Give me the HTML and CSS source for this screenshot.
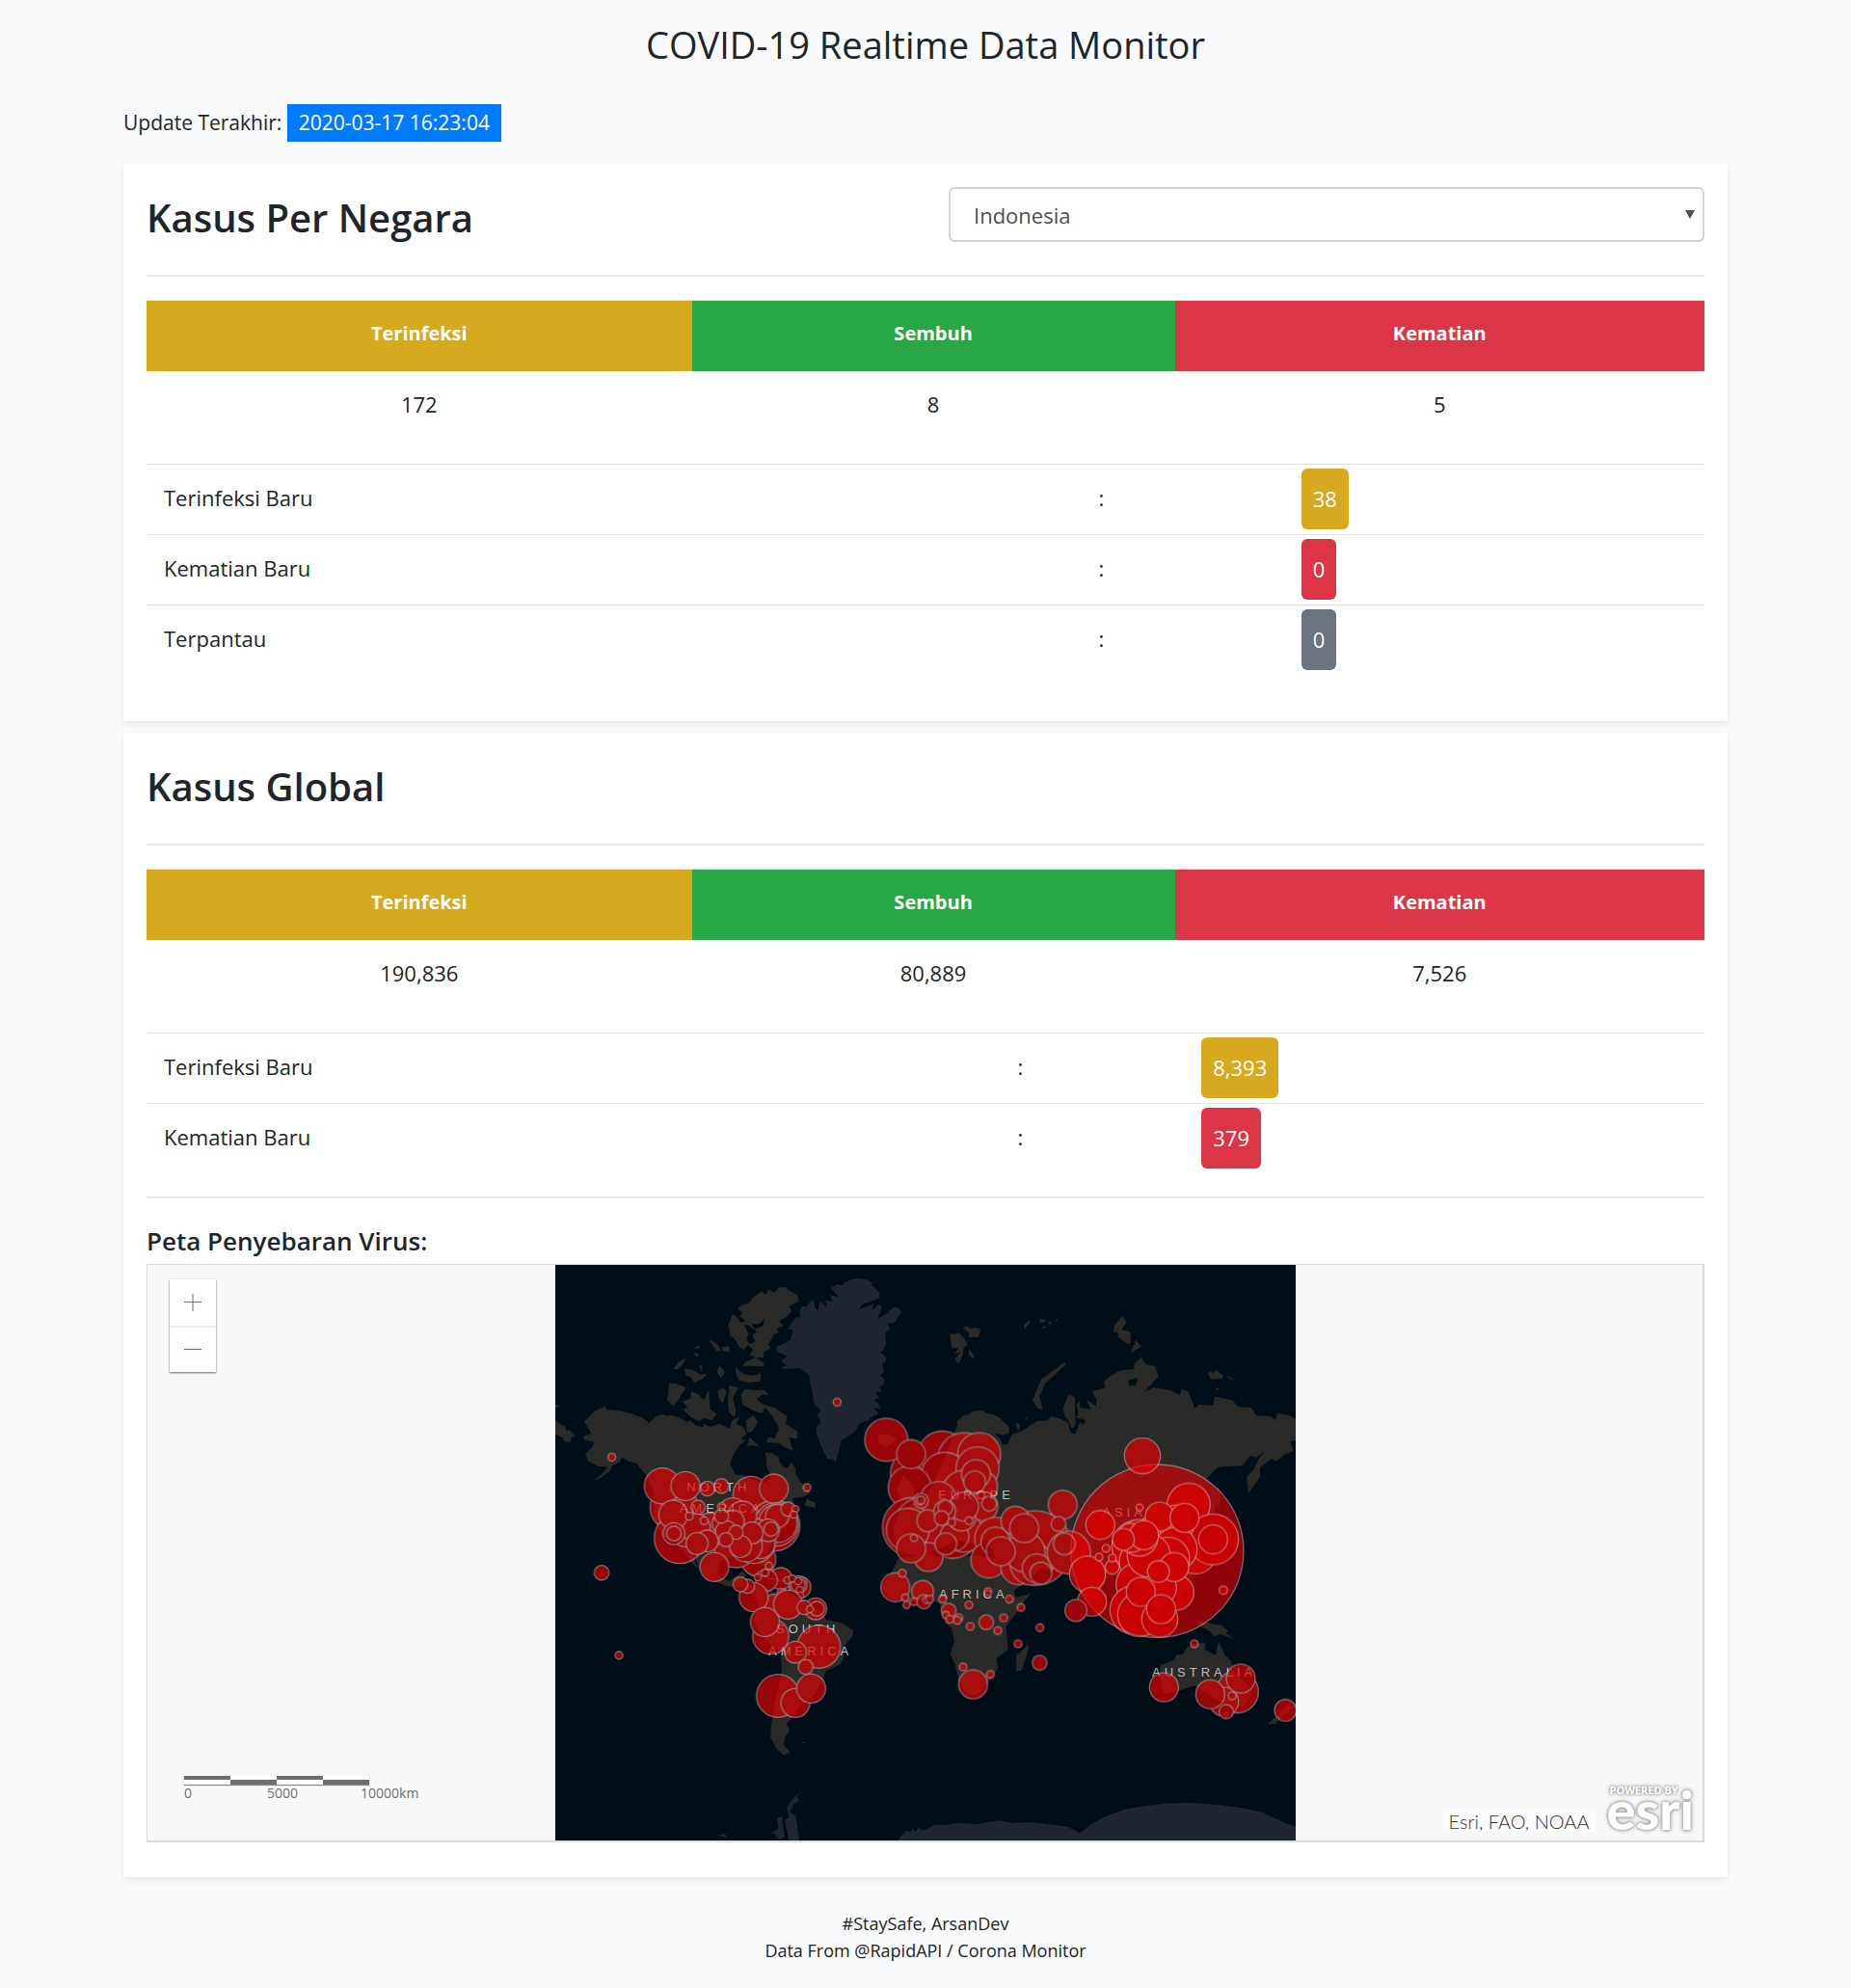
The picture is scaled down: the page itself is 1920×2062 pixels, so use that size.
FILE: index.html
```html
<!DOCTYPE html>
<html lang="id">
<head>
<meta charset="utf-8">
<meta name="viewport" content="width=device-width, initial-scale=1">
<title>COVID-19 Realtime Data Monitor</title>
<link rel="stylesheet" href="styles.css">
</head>
<body>
<div class="container">
  <header>
    <h1 class="page-title">COVID-19 Realtime Data Monitor</h1>
    <p class="updated">Update Terakhir: <span class="stamp">2020-03-17 16:23:04</span></p>
  </header>

  <main>
    <section class="card">
      <div class="card-head">
        <h2><label for="country">Kasus Per Negara</label></h2>
        <div class="select-wrap">
          <select id="country"><option>Indonesia</option></select>
        </div>
      </div>
      <table class="totals">
        <thead>
          <tr><th class="infected" scope="col">Terinfeksi</th><th class="recovered" scope="col">Sembuh</th><th class="deaths" scope="col">Kematian</th></tr>
        </thead>
        <tbody><tr><td>172</td><td>8</td><td>5</td></tr></tbody>
      </table>
      <table class="details">
        <tbody>
          <tr><td>Terinfeksi Baru</td><td>:</td><td><span class="badge infected">38</span></td></tr>
          <tr><td>Kematian Baru</td><td>:</td><td><span class="badge deaths">0</span></td></tr>
          <tr><td>Terpantau</td><td>:</td><td><span class="badge watched">0</span></td></tr>
        </tbody>
      </table>
    </section>

    <section class="card">
      <div class="card-head"><h2>Kasus Global</h2></div>
      <table class="totals">
        <thead>
          <tr><th class="infected" scope="col">Terinfeksi</th><th class="recovered" scope="col">Sembuh</th><th class="deaths" scope="col">Kematian</th></tr>
        </thead>
        <tbody><tr><td>190,836</td><td>80,889</td><td>7,526</td></tr></tbody>
      </table>
      <table class="details details-global">
        <tbody>
          <tr><td>Terinfeksi Baru</td><td>:</td><td><span class="badge infected">8,393</span></td></tr>
          <tr><td>Kematian Baru</td><td>:</td><td><span class="badge deaths">379</span></td></tr>
        </tbody>
      </table>
      <hr>
      <h3>Peta Penyebaran Virus:</h3>
      <div class="map">
        <svg class="world" viewBox="18 36 2304 1791" role="img" aria-label="Peta dunia">
          <rect class="sea" x="18" y="36" width="2304" height="1791"/>
          <!-- ice sheets -->
          <g class="ice">
            <path d="M780,198 L779,180 786,165 800,166 808,152 822,144 826,168 834,178 842,150 852,158 864,168 858,146 880,150 872,130 900,135 880,115 878,105 895,96 912,100 915,92 940,82 955,77 985,82 1003,90 1002,100 1026,120 1026,140 1000,150 975,158 962,175 990,165 1010,156 1003,178 1025,160 1035,165 1022,205 1045,190 1070,168 1082,168 1096,183 1072,216 1050,218 1060,235 1045,245 1047,280 1040,300 1030,308 1046,322 1047,335 1035,345 1042,370 1030,380 1044,392 1038,410 1025,418 1035,430 1015,432 1025,450 1008,456 1025,468 1030,485 1010,480 1025,500 1010,505 990,520 965,530 950,555 908,582 898,625 889,651 880,640 865,640 845,600 832,565 830,540 845,525 832,500 845,490 822,465 818,430 810,400 808,380 795,368 777,358 732,360 722,352 740,350 720,335 740,320 708,305 706,292 750,270 758,240 741,235 765,200z"/>
            <g transform="translate(0 600)">
              <path d="M800,1063 770,1088 775,1104 760,1114 748,1140 765,1148 778,1227 745,1227 732,1165 745,1155 738,1122 765,1090zM688,1205 713,1188 708,1158 722,1152 732,1215 715,1224 700,1206zM522,1212 545,1206 555,1217z"/>
              <path d="M1085,1227 1108,1196 1125,1200 1130,1186 1136,1200 1152,1185 1158,1195 1175,1192 1200,1178 1230,1180 1270,1172 1330,1176 1400,1165 1440,1172 1500,1170 1570,1178 1612,1184 1650,1204 1680,1180 1734,1150 1800,1128 1850,1120 1920,1112 1990,1110 2077,1116 2150,1124 2220,1140 2270,1165 2322,1184 2322,1227z"/>
            </g>
          </g>
          <!-- continents -->
          <g class="land">
            <path d="M108,523 L120,512 140,490 172,476 180,486 215,490 250,497 290,512 303,522 310,528 330,508 352,500 362,505 380,504 400,509 430,525 437,520 455,535 478,542 480,530 500,540 530,530 560,545 568,520 590,510 582,530 602,540 614,560 596,580 612,578 590,600 570,630 562,655 578,688 600,690 612,695 660,712 672,712 690,700 674,660 676,640 670,620 690,620 712,632 716,650 728,665 740,668 752,650 765,668 766,685 780,710 800,725 812,745 790,758 755,762 770,800 740,850 700,880 680,930 700,990 680,995 650,950 580,940 530,960 520,1000 560,1020 600,990 612,1000 600,1020 640,1040 660,1060 650,1075 600,1040 550,1035 490,1010 465,985 452,930 440,925 462,980 440,960 400,900 350,880 325,820 325,740 300,690 272,655 240,644 226,634 218,650 195,660 185,680 160,698 132,708 160,690 180,665 150,662 118,645 112,622 132,605 140,588 108,580 106,570 130,560 118,540z"/>
            <path d="M18,518 35,532 50,540 52,552 62,550 80,567 66,574 66,588 45,585 42,575 18,562zM18,470 30,472 28,478 18,480zM793,785 802,760 810,770 828,775 827,792z"/>
            <path d="M586,172 L600,160 620,155 632,138 660,118 672,128 682,112 700,122 712,107 735,105 742,115 760,122 774,135 776,150 745,165 755,180 735,200 715,210 728,225 705,235 715,245 695,255 690,270 680,285 690,295 668,305 665,325 640,325 622,315 635,300 615,285 640,275 630,255 645,245 640,235 665,225 670,205 650,220 630,220 640,240 620,225 605,222 620,250 612,268 622,280 605,300 590,290 575,265 560,255 560,235 555,225 570,190 580,195 595,215 610,212 592,195 600,185z"/>
            <path d="M578,350 590,365 605,375 635,380 658,372 656,398 620,402 590,395 582,380zM600,350 610,338 638,325 668,340 666,352 635,350zM495,268 520,280 535,302 520,305zM535,290 560,290 560,306 540,305zM386,360 400,340 425,325 415,345 400,360zM420,358 445,362 470,378 490,375 478,390 450,402 440,385 425,380zM466,350 474,348 475,372zM448,310 465,312 458,324zM520,368 530,348 545,368 535,390zM448,295 465,286 466,297z"/>
            <path d="M372,405 392,404 425,418 410,440 400,460 384,474 366,458zM414,462 440,450 440,430 462,438 480,455 495,425 498,460 500,485 520,500 505,520 482,512 465,522 440,510 415,485 430,480zM522,430 540,418 552,430 540,465 530,460zM560,412 588,418 570,450 580,490 575,510 558,495 555,460zM596,440 608,422 640,425 670,425 682,440 660,440 645,455 665,470 700,480 740,508 735,530 772,555 770,578 745,572 758,615 735,605 712,590 675,588 680,572 700,575 715,545 690,500 670,480 662,498 635,490 600,470zM610,520 635,505 648,525 630,555 615,558zM615,600 622,572 655,602 635,598z"/>
            <g transform="translate(0 600)">
              <path d="M600,440 L650,430 700,455 730,445 790,480 850,520 860,540 915,552 944,572 944,590 918,620 915,660 905,678 858,702 850,730 825,770 810,790 790,800 770,822 752,848 737,862 747,885 732,905 729,930 748,952 730,962 712,948 702,935 698,925 688,908 690,870 693,850 700,800 715,740 722,700 720,650 690,620 655,580 635,540 650,500 640,470zM785,921 795,921 795,924 787,925zM610,395 660,400 700,410 740,415 740,425 680,415z"/>
            </g>
            <g transform="translate(930 420)">
              <path d="M155,530 L130,580 100,620 130,655 180,665 250,655 285,670 290,700 300,730 320,745 330,785 317,827 333,862 345,915 370,955 400,955 440,910 465,872 462,840 497,812 491,740 530,690 548,662 567,640 520,650 515,625 480,570 460,530 400,520 300,530 250,515zM558,797 560,812 540,878 523,880 523,830 545,812z"/>
              <path d="M92,148 118,142 152,155 140,170 122,182 95,172zM150,320 170,270 200,300 210,340 170,350z"/>
            </g>
            <g transform="translate(1140 15)">
              <path d="M118,545 L130,518 128,508 148,490 165,486 178,477 205,474 222,484 240,486 262,498 290,525 290,545 270,550 245,545 262,562 270,580 284,578 300,548 325,540 350,525 375,508 410,505 420,492 450,500 475,512 480,540 495,548 510,510 520,518 528,508 520,500 500,498 505,480 500,455 508,445 512,465 530,468 545,470 530,440 560,460 562,440 548,415 590,403 585,385 610,363 640,348 678,345 680,328 700,308 715,330 745,336 755,368 710,416 740,403 790,410 822,426 826,408 848,415 868,468 880,455 925,458 930,430 985,442 1002,463 1043,465 1060,490 1105,492 1118,505 1125,483 1160,488 1182,500 1182,568 1165,570 1175,600 1150,610 1120,633 1108,625 1065,655 1085,600 1060,620 1040,615 1018,645 940,650 905,685 940,725 930,790 900,810 870,780 850,820 880,880 890,930 870,990 830,1050 780,1060 750,1100 720,1060 690,1010 650,990 600,990 580,1030 550,1085 510,1040 480,985 390,965 340,1010 305,1035 260,960 220,875 190,890 130,880 80,900 10,930 -60,910 -70,840 -50,790 30,740 60,690 90,620z"/>
              <path d="M363,443 375,410 392,375 425,352 460,325 468,330 430,365 402,390 385,430 395,470 380,468zM459,465 475,425 495,432 495,480 497,520 485,530 475,505 462,490zM105,235 120,238 132,232 148,245 162,270 148,278 148,295 133,330 122,315 138,292 120,298 132,280 112,280zM147,218 158,210 172,220 185,215 201,223 195,246 165,246 165,232zM165,282 182,305 178,312 165,302zM335,210 350,195 357,198 340,220zM383,190 405,192 400,200 388,200zM390,218 402,210 405,215zM412,198 422,195 418,210zM432,198 445,183 440,195zM618,210 643,179 656,200 640,222 668,230 668,266 655,265 632,248 628,232 615,230zM669,293 685,256 703,275zM908,360 918,350 925,358 935,348 957,365 955,374 920,378zM965,365 992,378 975,375zM932,408 940,402 945,412zM310,512 325,518 320,540zM340,495 348,498 343,503z"/>
            </g>
            <g transform="translate(1470 420)">
              <path d="M740,255 742,275 705,327 699,275 720,255 735,222 755,195 750,225zM612,305 620,340 612,375 602,335zM540,720 570,728 622,738 642,755 634,762 660,779 618,765 595,772 585,755 562,745z"/>
              <path d="M430,862 L475,845 480,830 500,828 515,805 535,795 570,792 568,812 602,830 612,788 632,830 652,850 655,875 700,920 715,950 690,990 650,1000 600,965 540,925 490,940 440,950 430,900zM765,1045 790,1022 825,985 850,990 810,1020 790,1045zM622,1008 648,1005 635,1028z"/>
            </g>
          </g>
          <path class="sea" d="M1800,395 1830,388 1825,410 1805,412z"/>
          <!-- continent names -->
          <g class="names">
            <text x="427" y="741">NORTH</text><text x="404" y="808">AMERICA</text>
            <text x="705" y="1183">SOUTH</text><text x="681" y="1250">AMERICA</text>
            <text x="1209" y="766">EUROPE</text><text x="1212" y="1075">AFRICA</text>
            <text x="1720" y="819">ASIA</text><text x="1875" y="1316">AUSTRALIA</text>
          </g>
          <!-- outbreak epicentre -->
          <circle class="epicentre" cx="1891" cy="926" r="269"/>
          <!-- outbreak markers -->
          <g class="cases">
            <circle cx="895" cy="463" r="12"/><circle cx="194" cy="634" r="12"/>
            <g transform="translate(0 600)">
              <circle cx="387" cy="190" r="74"/><circle cx="351" cy="124" r="56"/><circle cx="405" cy="286" r="79"/><circle cx="627" cy="150" r="56"/>
              <circle cx="650" cy="352" r="54"/><circle cx="580" cy="310" r="68"/><circle cx="700" cy="247" r="79"/><circle cx="706" cy="243" r="68"/><circle cx="710" cy="240" r="60"/>
              <circle cx="635" cy="295" r="70"/><circle cx="655" cy="305" r="45"/><circle cx="612" cy="310" r="50"/><circle cx="500" cy="260" r="52"/>
              <circle cx="423" cy="268" r="45"/><circle cx="455" cy="255" r="45"/><circle cx="385" cy="213" r="45"/><circle cx="423" cy="124" r="45"/><circle cx="698" cy="132" r="45"/>
              <circle cx="570" cy="206" r="45"/><circle cx="600" cy="216" r="45"/><circle cx="560" cy="246" r="45"/><circle cx="708" cy="218" r="36"/><circle cx="680" cy="262" r="35"/>
              <circle cx="540" cy="240" r="34"/><circle cx="572" cy="234" r="34"/><circle cx="550" cy="266" r="34"/><circle cx="630" cy="270" r="34"/><circle cx="594" cy="312" r="34"/>
              <circle cx="491" cy="295" r="34"/><circle cx="459" cy="303" r="34"/><circle cx="387" cy="272" r="34"/><circle cx="387" cy="272" r="23"/>
              <circle cx="535" cy="218" r="22"/><circle cx="580" cy="268" r="22"/><circle cx="549" cy="291" r="22"/><circle cx="689" cy="258" r="22"/><circle cx="742" cy="196" r="22"/>
              <circle cx="462" cy="190" r="22"/><circle cx="491" cy="132" r="23"/><circle cx="535" cy="124" r="23"/><circle cx="535" cy="188" r="12"/>
              <circle cx="435" cy="218" r="12"/><circle cx="481" cy="232" r="12"/><circle cx="765" cy="196" r="11"/><circle cx="760" cy="213" r="11"/><circle cx="801" cy="129" r="12"/>
              <circle cx="513" cy="376" r="45"/><circle cx="162" cy="394" r="23"/><circle cx="216" cy="651" r="12"/>
              <circle cx="720" cy="412" r="34"/><circle cx="675" cy="417" r="34"/><circle cx="700" cy="495" r="34"/><circle cx="635" cy="470" r="45"/><circle cx="616" cy="436" r="22"/><circle cx="594" cy="430" r="23"/>
              <circle cx="683" cy="372" r="11"/><circle cx="671" cy="394" r="11"/><circle cx="648" cy="408" r="11"/><circle cx="779" cy="439" r="34"/><circle cx="773" cy="431" r="28"/><circle cx="773" cy="431" r="22"/>
              <circle cx="740" cy="417" r="11"/><circle cx="755" cy="412" r="11"/><circle cx="773" cy="420" r="11"/><circle cx="778" cy="448" r="11"/><circle cx="779" cy="465" r="11"/><circle cx="720" cy="454" r="11"/><circle cx="729" cy="457" r="12"/>
              <circle cx="742" cy="493" r="45"/><circle cx="828" cy="506" r="34"/><circle cx="832" cy="506" r="23"/><circle cx="792" cy="502" r="22"/><circle cx="810" cy="507" r="11"/>
              <circle cx="688" cy="591" r="56"/><circle cx="670" cy="547" r="45"/><circle cx="838" cy="624" r="67"/><circle cx="765" cy="641" r="34"/><circle cx="797" cy="687" r="23"/>
              <circle cx="711" cy="777" r="67"/><circle cx="765" cy="799" r="45"/><circle cx="814" cy="754" r="45"/>
            </g>
            <g transform="translate(930 420)">
              <circle cx="210" cy="265" r="79"/><circle cx="292" cy="211" r="78"/><circle cx="118" cy="160" r="67"/><circle cx="360" cy="220" r="82"/>
              <circle cx="407" cy="205" r="67"/><circle cx="300" cy="272" r="73"/><circle cx="402" cy="249" r="67"/><circle cx="191" cy="309" r="67"/><circle cx="195" cy="205" r="45"/>
              <circle cx="360" cy="325" r="70"/><circle cx="415" cy="305" r="49"/><circle cx="397" cy="267" r="45"/><circle cx="393" cy="291" r="34"/>
              <circle cx="198" cy="432" r="92"/><circle cx="230" cy="430" r="90"/><circle cx="323" cy="440" r="89"/><circle cx="185" cy="440" r="67"/><circle cx="280" cy="346" r="56"/>
              <circle cx="370" cy="385" r="56"/><circle cx="380" cy="410" r="57"/><circle cx="360" cy="450" r="60"/><circle cx="420" cy="367" r="45"/><circle cx="330" cy="460" r="45"/>
              <circle cx="352" cy="399" r="45"/><circle cx="360" cy="368" r="45"/><circle cx="249" cy="525" r="45"/><circle cx="195" cy="498" r="45"/><circle cx="303" cy="484" r="34"/>
              <circle cx="247" cy="412" r="34"/><circle cx="300" cy="382" r="34"/><circle cx="302" cy="371" r="23"/><circle cx="290" cy="404" r="23"/><circle cx="438" cy="359" r="23"/>
              <circle cx="226" cy="350" r="23"/><circle cx="223" cy="349" r="14"/><circle cx="226" cy="348" r="12"/><circle cx="204" cy="466" r="11"/><circle cx="321" cy="417" r="12"/><circle cx="375" cy="412" r="12"/>
              <circle cx="460" cy="468" r="67"/><circle cx="437" cy="534" r="56"/><circle cx="580" cy="497" r="116"/><circle cx="520" cy="412" r="45"/><circle cx="530" cy="555" r="56"/><circle cx="570" cy="545" r="67"/>
              <circle cx="550" cy="510" r="62"/><circle cx="458" cy="477" r="45"/><circle cx="474" cy="507" r="45"/><circle cx="547" cy="435" r="45"/><circle cx="586" cy="560" r="45"/><circle cx="599" cy="575" r="34"/>
              <circle cx="667" cy="362" r="45"/><circle cx="654" cy="422" r="23"/><circle cx="686" cy="511" r="67"/><circle cx="672" cy="484" r="34"/>
              <circle cx="146" cy="619" r="45"/><circle cx="168" cy="575" r="12"/><circle cx="231" cy="632" r="34"/><circle cx="177" cy="651" r="11"/><circle cx="181" cy="674" r="11"/><circle cx="204" cy="664" r="12"/>
              <circle cx="235" cy="664" r="22"/><circle cx="244" cy="658" r="12"/><circle cx="253" cy="656" r="12"/><circle cx="293" cy="656" r="12"/><circle cx="434" cy="633" r="12"/><circle cx="501" cy="656" r="12"/>
              <circle cx="375" cy="674" r="12"/><circle cx="537" cy="682" r="12"/><circle cx="312" cy="692" r="23"/><circle cx="303" cy="705" r="11"/><circle cx="316" cy="719" r="12"/><circle cx="344" cy="714" r="12"/><circle cx="339" cy="722" r="12"/>
              <circle cx="429" cy="728" r="23"/><circle cx="483" cy="714" r="12"/><circle cx="379" cy="741" r="12"/><circle cx="465" cy="754" r="12"/><circle cx="596" cy="745" r="12"/><circle cx="528" cy="795" r="12"/>
              <circle cx="595" cy="854" r="23"/><circle cx="357" cy="867" r="12"/><circle cx="442" cy="890" r="12"/><circle cx="388" cy="921" r="45"/>
            </g>
            <g transform="translate(1470 420)">
              <circle cx="375" cy="210" r="56"/><circle cx="204" cy="578" r="56"/><circle cx="218" cy="664" r="45"/><circle cx="168" cy="691" r="34"/>
              <circle cx="244" cy="425" r="45"/><circle cx="540" cy="510" r="67"/><circle cx="519" cy="362" r="67"/><circle cx="595" cy="470" r="79"/><circle cx="595" cy="470" r="45"/>
              <circle cx="360" cy="490" r="80"/><circle cx="425" cy="470" r="80"/><circle cx="480" cy="420" r="57"/><circle cx="478" cy="500" r="67"/><circle cx="455" cy="530" r="67"/><circle cx="370" cy="540" r="67"/>
              <circle cx="360" cy="610" r="67"/><circle cx="350" cy="690" r="76"/><circle cx="366" cy="704" r="68"/><circle cx="480" cy="635" r="55"/><circle cx="425" cy="620" r="56"/><circle cx="395" cy="520" r="67"/>
              <circle cx="366" cy="465" r="57"/><circle cx="340" cy="465" r="45"/><circle cx="429" cy="399" r="45"/><circle cx="506" cy="403" r="45"/><circle cx="380" cy="457" r="45"/><circle cx="316" cy="470" r="34"/>
              <circle cx="474" cy="556" r="45"/><circle cx="425" cy="570" r="34"/><circle cx="370" cy="633" r="45"/><circle cx="429" cy="718" r="56"/><circle cx="433" cy="687" r="45"/><circle cx="281" cy="556" r="22"/>
              <circle cx="366" cy="371" r="11"/><circle cx="262" cy="498" r="12"/><circle cx="240" cy="525" r="12"/><circle cx="281" cy="528" r="12"/><circle cx="627" cy="628" r="13"/><circle cx="537" cy="795" r="12"/>
              <circle cx="442" cy="930" r="45"/><circle cx="670" cy="944" r="66"/><circle cx="629" cy="975" r="45"/><circle cx="586" cy="952" r="45"/><circle cx="681" cy="903" r="45"/><circle cx="636" cy="1006" r="22"/><circle cx="654" cy="957" r="12"/><circle cx="820" cy="1002" r="34"/>
            </g>
          </g>
        </svg>

        <div class="zoom">
          <button type="button" aria-label="Zoom in"><svg viewBox="0 0 18 18"><path d="M0 8.500H18M9 0V18"/></svg></button>
          <button type="button" aria-label="Zoom out"><svg viewBox="0 0 18 18"><path d="M0 8.500H18"/></svg></button>
        </div>
        <div class="scale">
          <div class="scale-bar"><i></i><i></i><i></i><i></i></div>
          <div class="scale-labels"><span>0</span><span>5000</span><span>10000km</span></div>
        </div>
        <div class="credits">
          <span class="sources">Esri, FAO, NOAA</span>
          <a class="esri" href="#esri"><small>POWERED BY</small>esri</a>
        </div>
      </div>
    </section>
  </main>

  <footer>
    <p>#StaySafe, ArsanDev</p>
    <p>Data From @RapidAPI / Corona Monitor</p>
  </footer>
</div>
</body>
</html>
```
FILE: styles.css
```css
* { box-sizing: border-box; }

body {
  margin: 0;
  background: #f8fafc;
  color: #212529;
  font: 400 22px/36px "Open Sans", "Noto Sans", sans-serif;
}

h1, h2, h3, p { margin: 0; }

.container {
  max-width: 1712px;
  margin: 0 auto;
  padding: 18px 24px;
}

.page-title {
  font-size: 38px;
  font-weight: 400;
  line-height: 56px;
  text-align: center;
}

.updated {
  margin: 34px 0 23px;
  font-size: 21px;
  line-height: 39px;
}

.stamp {
  display: inline-block;
  padding: 0 12px;
  background: #007bff;
  color: #fff;
}

.card {
  margin-bottom: 12px;
  padding: 24px;
  background: #fff;
  box-shadow: 0 3px 6px rgba(0, 0, 0, .075);
}

.card-head {
  display: grid;
  grid-template-columns: 1fr 1fr;
  column-gap: 48px;
  min-height: 93px;
  margin-bottom: 24px;
  border-bottom: 2px solid #e8e9ea;
}

h2 {
  font-size: 40px;
  font-weight: 600;
  line-height: 64px;
}

.select-wrap { position: relative; }

.select-wrap::after {
  content: "";
  position: absolute;
  top: 24px;
  right: 10px;
  border: 5px solid transparent;
  border-top: 9px solid #495057;
  border-bottom: 0;
}

select {
  width: 100%;
  height: 57px;
  padding: 0 24px;
  appearance: none;
  border: 2px solid #ced4da;
  border-radius: 6px;
  background: #fff;
  color: #495057;
  font: inherit;
}

table {
  width: 100%;
  border-collapse: collapse;
  table-layout: fixed;
}

th, td {
  height: 73px;
  padding: 0 18px 4px;
  border-top: 1px solid #dee2e6;
}

.totals {
  margin-bottom: 23px;
  text-align: center;
}

.totals th { color: #fff; font-size: 20px; font-weight: 700; }
.totals th:nth-child(1) { width: 35%; }
.totals th:nth-child(2) { width: 31%; }
.totals td { border-top: 0; }

.details { margin-bottom: 24px; }
.details td:nth-child(1) { width: 60%; }
.details td:nth-child(2) { width: 13%; }
.details td:nth-child(3) { padding-bottom: 0; }
.details-global td:nth-child(1) { width: 54.8%; }
.details-global td:nth-child(2) { width: 11.8%; }

.infected { background: #d6a91e; }
.recovered { background: #28a745; }
.deaths { background: #dc3545; }
.watched { background: #6c757d; }

.badge {
  display: inline-block;
  padding: 0 12px;
  border-radius: 6px;
  color: #fff;
  line-height: 63px;
  vertical-align: middle;
}

hr {
  margin: 0 0 24px;
  border: 0;
  border-top: 2px solid #e8e9ea;
}

h3 {
  margin-bottom: 4px;
  font-size: 26px;
  font-weight: 600;
  line-height: 40px;
}

.map {
  position: relative;
  display: flex;
  justify-content: center;
  margin-bottom: 12px;
  border: 1px solid #dcdcdc;
  border-width: 1px 2px 2px 1px;
  background: #f8f8f8;
}

.world {
  display: block;
  width: 768px;
  max-width: 100%;
}

.sea { fill: #000e18; }
.land { fill: #2a2a28; }
.ice { fill: #20262f; }

.names {
  fill: #bdbdbd;
  font: 400 39px "Liberation Sans", Arial, sans-serif;
  letter-spacing: 12px;
}

.cases { opacity: .67; }

.cases circle,
.epicentre {
  fill: #e60000;
  stroke: rgba(215, 205, 205, .75);
  stroke-width: 4px;
}

.epicentre { opacity: .62; }

.zoom {
  position: absolute;
  top: 15px;
  left: 23px;
  width: 48px;
  box-shadow: 0 1px 2px rgba(0, 0, 0, .6);
}

.zoom button {
  display: flex;
  align-items: center;
  justify-content: center;
  width: 100%;
  height: 48px;
  padding: 0;
  border: 0;
  background: #fff;
}

.zoom button + button {
  border-top: 2px solid #eee;
  background: #fcfdfd;
}

.zoom svg {
  width: 18px;
  height: 18px;
  stroke: #6e6e6e;
}

.scale {
  position: absolute;
  bottom: 40px;
  left: 38px;
  width: 192px;
  color: #6e6e6e;
  font-size: 14px;
  line-height: 18px;
}

.scale-bar {
  display: flex;
  height: 9px;
  box-shadow: 0 1px 1px #888;
}

.scale-bar i {
  flex: 1;
  background: linear-gradient(#6e6e6e 4px, #fff 4px);
}

.scale-bar i:nth-child(even) { background: linear-gradient(#fff 4px, #6e6e6e 4px); }

.scale-labels {
  display: grid;
  grid-template-columns: 86px 97px 1fr;
}

.credits {
  position: absolute;
  right: 9px;
  bottom: 9px;
  display: flex;
  align-items: flex-end;
  gap: 12px;
}

.sources {
  padding: 0 6px;
  background: rgba(255, 255, 255, .6);
  color: #323232;
  font: 300 20px/22px Lato, sans-serif;
}

.esri {
  display: block;
  padding-bottom: 8px;
  color: #fff;
  font: 900 56px/30px Lato, sans-serif;
  text-decoration: none;
  text-shadow: 0 0 3px #888, 0 0 5px #999;
}

.esri small {
  display: block;
  margin-left: 3px;
  font: 700 11px/10px "Open Sans", sans-serif;
}

footer {
  padding: 22px 0 4px;
  font-size: 18px;
  line-height: 28px;
  text-align: center;
}
```
